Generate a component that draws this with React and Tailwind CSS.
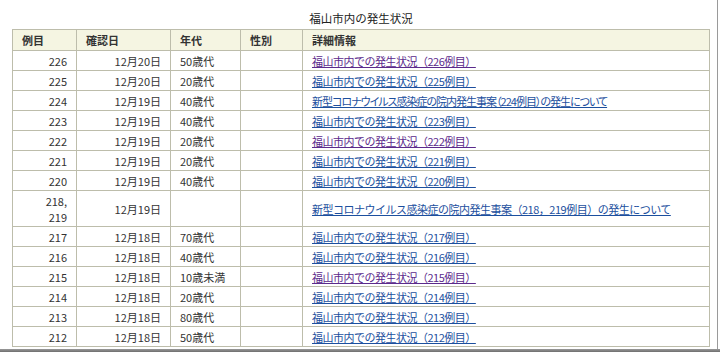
const rows = [
  { no: '226', date: '12月20日', age: '50歳代', text: '福山市内での発生状況（226例目）', visited: true },
  { no: '225', date: '12月20日', age: '20歳代', text: '福山市内での発生状況（225例目）' },
  { no: '224', date: '12月19日', age: '40歳代', text: '新型コロナウイルス感染症の院内発生事案（224例目）の発生について', long: true },
  { no: '223', date: '12月19日', age: '40歳代', text: '福山市内での発生状況（223例目）' },
  { no: '222', date: '12月19日', age: '20歳代', text: '福山市内での発生状況（222例目）', visited: true },
  { no: '221', date: '12月19日', age: '20歳代', text: '福山市内での発生状況（221例目）' },
  { no: '220', date: '12月19日', age: '40歳代', text: '福山市内での発生状況（220例目）' },
  { no: ['218,', '219'], date: '12月19日', age: '', text: '新型コロナウイルス感染症の院内発生事案（218，219例目）の発生について', tall: true },
  { no: '217', date: '12月18日', age: '70歳代', text: '福山市内での発生状況（217例目）' },
  { no: '216', date: '12月18日', age: '40歳代', text: '福山市内での発生状況（216例目）' },
  { no: '215', date: '12月18日', age: '10歳未満', text: '福山市内での発生状況（215例目）', visited: true },
  { no: '214', date: '12月18日', age: '20歳代', text: '福山市内での発生状況（214例目）' },
  { no: '213', date: '12月18日', age: '80歳代', text: '福山市内での発生状況（213例目）' },
  { no: '212', date: '12月18日', age: '50歳代', text: '福山市内での発生状況（212例目）' },
];

const cell = 'border border-[#bdbdab] px-[9px] py-0 leading-[14px]';

export default function App() {
  return (
    <div
      className="w-[720px] h-[352px] bg-white overflow-hidden text-[#333] text-[11px]"
      style={{ fontFamily: '"Noto Sans CJK JP", "DejaVu Sans", sans-serif' }}
    >
      <div className="w-[718px] h-[349px] border-r border-[#9a9a9a] pl-[12px] pt-[11px]">
        <table className="border-collapse w-[698px] table-fixed">
          <caption className="text-center h-[18px] leading-[14px] text-[11.5px] text-[#222]">福山市内の発生状況</caption>
          <colgroup>
            <col className="w-[64px]" />
            <col className="w-[94px]" />
            <col className="w-[70px]" />
            <col className="w-[62px]" />
            <col />
          </colgroup>
          <thead>
            <tr className="h-[21px] bg-[#f5f5e2]">
              <th className={`${cell} text-left font-bold`}>例目</th>
              <th className={`${cell} text-left font-bold`}>確認日</th>
              <th className={`${cell} text-left font-bold`}>年代</th>
              <th className={`${cell} text-left font-bold`}>性別</th>
              <th className={`${cell} text-left font-bold`}>詳細情報</th>
            </tr>
          </thead>
          <tbody>
            {rows.map((r, i) => (
              <tr key={i} className={r.tall ? 'h-[36px]' : 'h-[20px]'}>
                <td className={`${cell} text-right`}>
                  {Array.isArray(r.no) ? (
                    <div className="flex flex-col items-end gap-[2px]">
                      <span>{r.no[0]}</span>
                      <span>{r.no[1]}</span>
                    </div>
                  ) : (
                    r.no
                  )}
                </td>
                <td className={`${cell} text-right`}>{r.date}</td>
                <td className={cell}>{r.age}</td>
                <td className={cell}></td>
                <td
                  className={`${cell} ${
                    r.long ? "tracking-[-1px] [font-feature-settings:'palt']" : 'tracking-[-0.5px]'
                  }`}
                >
                  <a href="#" className={`underline ${r.visited ? 'text-[#5b2a8c]' : 'text-[#1c4f9e]'}`}>
                    {r.text}
                  </a>
                </td>
              </tr>
            ))}
          </tbody>
        </table>
      </div>
      <div className="h-[3px] bg-gradient-to-b from-[#9a9a9a] to-[#6e6e6e]" />
    </div>
  );
}
